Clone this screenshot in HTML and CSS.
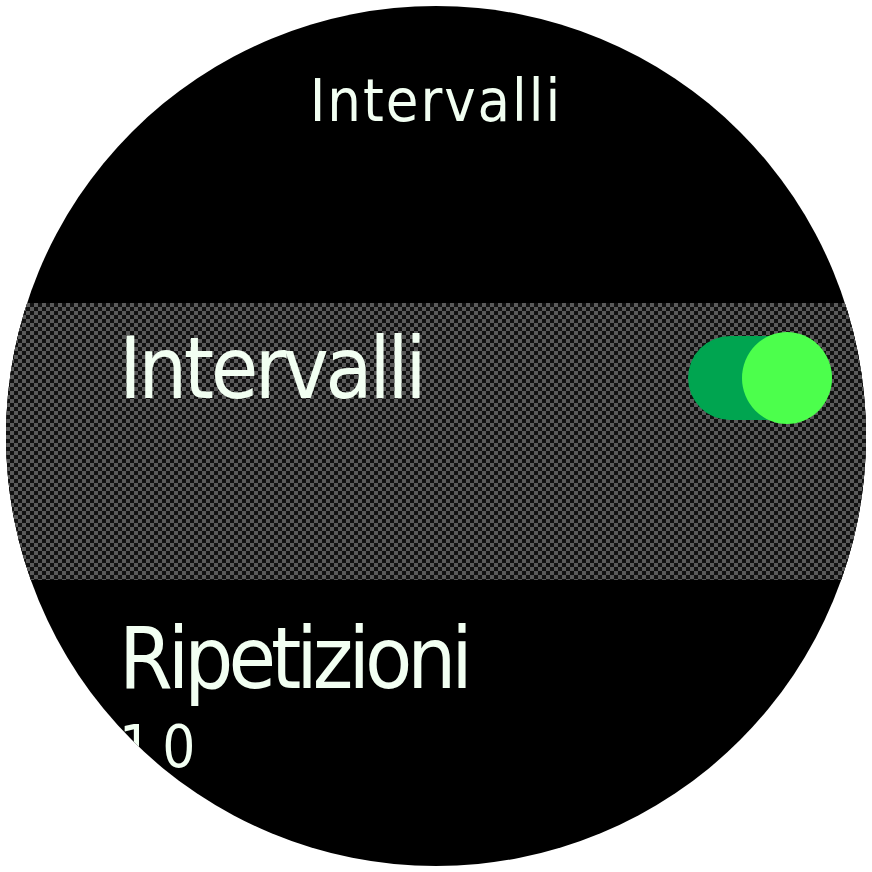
FILE: index.html
```html
<!DOCTYPE html>
<html lang="it">
<head>
  <meta charset="UTF-8">
  <title>Intervalli</title>
  <link rel="stylesheet" href="styles.css">
</head>
<body>
  <div class="watch">
    <div class="title">Intervalli</div>

    <!-- voce selezionata -->
    <div class="row selected">
      <span class="label">Intervalli</span>
      <span class="toggle on"><span class="knob"></span></span>
    </div>

    <div class="row">
      <div class="label">Ripetizioni</div>
      <div class="value">10</div>
    </div>
  </div>
</body>
</html>
```

FILE: styles.css
```css
body {
  margin: 0;
  background-color: #ffffff;
}

.watch {
  width: 860px;
  height: 860px;
  margin: 6px;
  border-radius: 50%;
  background-color: #000;
  color: #f2fff2;
  font-family: 'DejaVu Sans Condensed', 'DejaVu Sans', sans-serif;
  overflow: hidden;
}

.title {
  box-sizing: border-box;
  height: 297px;
  padding-top: 65px;
  font-size: 59px;
  line-height: 59px;
  letter-spacing: 2px;
  text-align: center;
}

.row {
  box-sizing: border-box;
  padding-left: 113px;
  padding-top: 35px;
}

.row.selected {
  display: flex;
  justify-content: space-between;
  align-items: flex-start;
  height: 277px;
  padding-top: 22px;
  padding-right: 34px;
  background-color: #111;
  background-image: conic-gradient(#5a5a5a 25%, #111 0 50%, #5a5a5a 0 75%, #111 0);
  background-size: 8px 8px;
}

.label {
  font-size: 86px;
  line-height: 86px;
  letter-spacing: -5px;
}

.selected .label {
  letter-spacing: -3.5px;
}

.value {
  margin-top: 17px;
  font-size: 58px;
  line-height: 58px;
  letter-spacing: 10px;
}

.toggle {
  position: relative;
  width: 144px;
  height: 84px;
  margin-top: 11px;
  border-radius: 42px;
  background-color: #00a550;
}

.toggle .knob {
  position: absolute;
  right: 0;
  top: -4px;
  width: 90px;
  height: 92px;
  border-radius: 50%;
  background-color: #4cff4c;
}
```
